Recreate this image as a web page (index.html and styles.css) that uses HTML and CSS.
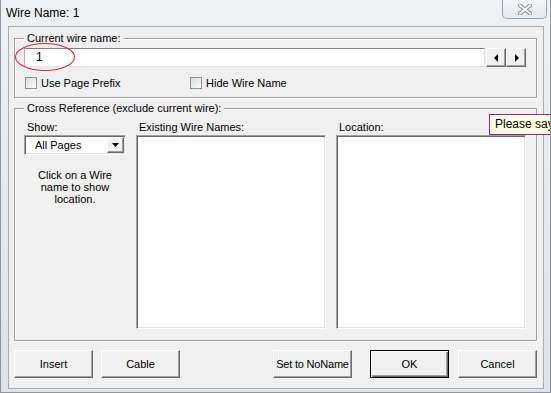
FILE: index.html
```html
<!DOCTYPE html>
<html lang="en">
<head>
  <meta charset="UTF-8" />
  <title>Wire Name: 1</title>
  <link rel="stylesheet" href="styles.css">
</head>
<body>
  <div class="window">
    <div class="titlebar">
      <span class="title">Wire Name: 1</span>
      <div class="close">
        <svg width="14" height="11" viewBox="0 0 14 11">
          <path d="M2 1.5 L12 9.5 M12 1.5 L2 9.5" stroke="#8a9099" stroke-width="4" stroke-linecap="square"/>
          <path d="M2 1.5 L12 9.5 M12 1.5 L2 9.5" stroke="#f4f6f8" stroke-width="2" stroke-linecap="square"/>
        </svg>
      </div>
    </div>

    <div class="client">
      <fieldset class="group group-name">
        <legend>Current wire name:</legend>
        <div class="name-row">
          <div class="textbox">1</div>
          <div class="spin">
            <div class="spin-btn">
              <svg width="5" height="8" viewBox="0 0 5 8"><path d="M4 0 L0 4 L4 8 Z" fill="#000"/></svg>
            </div>
            <div class="spin-btn">
              <svg width="5" height="8" viewBox="0 0 5 8"><path d="M1 0 L5 4 L1 8 Z" fill="#000"/></svg>
            </div>
          </div>
        </div>
        <div class="check-row">
          <label class="check check-prefix"><span class="box"></span>Use Page Prefix</label>
          <label class="check"><span class="box"></span>Hide Wire Name</label>
        </div>
      </fieldset>

      <fieldset class="group group-xref">
        <legend>Cross Reference (exclude current wire):</legend>
        <div class="xref">
          <div class="col-label">Show:</div>
          <div class="col-label">Existing Wire Names:</div>
          <div class="col-label">Location:</div>
          <div class="show-col">
            <div class="combo">
              <span class="combo-text">All Pages</span>
              <span class="combo-btn">
                <svg width="7" height="4" viewBox="0 0 7 4"><path d="M0 0 L7 0 L3.5 4 Z" fill="#000"/></svg>
              </span>
            </div>
            <p class="note">Click on a Wire<br>name to show<br>location.</p>
          </div>
          <div class="listbox"></div>
          <div class="listbox"></div>
        </div>
      </fieldset>

      <div class="buttons">
        <div class="btn">Insert</div>
        <div class="btn">Cable</div>
        <div class="btn btn-noname">Set to NoName</div>
        <div class="btn btn-default">OK</div>
        <div class="btn">Cancel</div>
      </div>
    </div>

    <svg class="mark" width="62" height="30" viewBox="0 0 62 30">
      <ellipse cx="31" cy="15" rx="29.5" ry="13.5" fill="none" stroke="#e0282a" stroke-width="1.1"/>
    </svg>
    <div class="tooltip">Please say the wire name</div>
  </div>
</body>
</html>
```

FILE: styles.css
```css
body {
  margin: 0;
  font-family: "Liberation Sans", Arial, sans-serif;
  font-size: 11px;
  color: #000;
  overflow: hidden;
}
.window {
  position: relative;
  width: 551px;
  height: 393px;
  box-sizing: border-box;
  display: flex;
  flex-direction: column;
  overflow: hidden;
  background: linear-gradient(180deg, #eef2f5 0%, #e3e9ee 60%, #dde4ea 100%);
  border-left: 1px solid #8d969f;
  border-right: 1px solid #8d969f;
  border-bottom: 1px solid #8d969f;
}
.titlebar {
  height: 26px;
  flex: none;
  display: flex;
  align-items: flex-start;
  justify-content: space-between;
}
.title {
  font-size: 12px;
  line-height: 14px;
  margin: 6px 0 0 5px;
}
.close {
  width: 45px;
  height: 19px;
  margin-right: 3px;
  box-sizing: border-box;
  border: 1px solid #98a2ad;
  border-top: none;
  border-radius: 0 0 5px 5px;
  background: linear-gradient(180deg, #f3f5f7, #e4e9ee);
  display: flex;
  align-items: center;
  justify-content: center;
}
.client {
  flex: none;
  height: 363px;
  margin: 0 6px 0 7px;
  box-sizing: border-box;
  border: 1px solid #a3acb5;
  background: #f0f0f0;
  padding: 0 6px 0 5px;
}

/* group boxes */
.group {
  margin: 0;
  border: 1px solid #a0a0a0;
  box-shadow: 1px 1px 0 #fff, inset 1px 1px 0 #fff;
  min-width: 0;
}
.group legend {
  padding: 0 3px;
  font-size: 11px;
  line-height: 14px;
  background: #f0f0f0;
}
.group-name {
  margin-top: 4px;
  padding: 3px 10px 7px 9px;
}
.group-xref {
  margin-top: 3px;
  padding: 5px 10px 11px 9px;
}

/* current wire name */
.name-row {
  display: flex;
  height: 19px;
}
.textbox {
  width: 461px;
  box-sizing: border-box;
  background: #fff;
  border: 1px solid;
  border-color: #7f8388 #e3e6ea #e3e6ea #aeb2b6;
  font-size: 12px;
  line-height: 17px;
  padding-left: 11px;
}
.spin {
  display: flex;
  margin-left: 1px;
}
.spin-btn {
  width: 20px;
  height: 19px;
  box-sizing: border-box;
  border: 1px solid;
  border-color: #fff #696969 #696969 #fff;
  box-shadow: inset -1px -1px 0 #a0a0a0;
  background: #f0f0f0;
  display: flex;
  align-items: center;
  justify-content: center;
}
.check-row {
  display: flex;
  margin-top: 9px;
  line-height: 14px;
}
.check {
  display: flex;
  align-items: center;
  padding-left: 1px;
}
.check-prefix {
  width: 164px;
}
.box {
  width: 12px;
  height: 12px;
  box-sizing: border-box;
  border: 1px solid #8e8f8f;
  background: linear-gradient(135deg, #dcdcdc, #fbfbfb);
  margin-right: 4px;
}

/* cross reference */
.xref {
  display: grid;
  grid-template-columns: 102px 190px 190px;
  grid-template-rows: 15px 194px;
  column-gap: 10px;
}
.col-label {
  padding-left: 3px;
  line-height: 14px;
}
.combo {
  height: 20px;
  box-sizing: border-box;
  border: 1px solid;
  border-color: #a0a0a0 #fff #fff #a0a0a0;
  box-shadow: inset 1px 1px 0 #696969, inset -1px -1px 0 #e3e3e3;
  background: #fff;
  display: flex;
  align-items: center;
  justify-content: space-between;
  padding: 0 1px 0 10px;
}
.combo-btn {
  width: 17px;
  height: 16px;
  box-sizing: border-box;
  border: 1px solid;
  border-color: #fff #696969 #696969 #fff;
  box-shadow: inset -1px -1px 0 #a0a0a0;
  background: #f0f0f0;
  display: flex;
  align-items: center;
  justify-content: center;
}
.note {
  margin: 14px 0 0;
  text-align: center;
  line-height: 12px;
}
.listbox {
  box-sizing: border-box;
  border: 1px solid;
  border-color: #a0a0a0 #fff #fff #a0a0a0;
  box-shadow: inset 1px 1px 0 #696969, inset -1px -1px 0 #e3e3e3;
  background: #fff;
}

/* bottom buttons */
.buttons {
  display: flex;
  margin-top: 9px;
}
.btn {
  width: 79px;
  height: 28px;
  box-sizing: border-box;
  border: 1px solid;
  border-color: #fff #696969 #696969 #fff;
  box-shadow: inset -1px -1px 0 #a0a0a0;
  background: #f0f0f0;
  display: flex;
  align-items: center;
  justify-content: center;
  margin-right: 8px;
  white-space: nowrap;
}
.btn-noname {
  margin-left: auto;
  margin-right: 18px;
  letter-spacing: -0.2px;
}
.btn-default {
  border: 1px solid #000;
  box-shadow: inset 1px 1px 0 #fff, inset -1px -1px 0 #696969, inset -2px -2px 0 #a0a0a0;
  margin-right: 9px;
}
.buttons .btn:last-child {
  margin-right: 0;
}

/* overlays */
.mark {
  position: absolute;
  left: 13px;
  top: 42px;
}
.tooltip {
  position: absolute;
  left: 488px;
  top: 114px;
  height: 21px;
  box-sizing: border-box;
  border: 1px solid #9c1c9e;
  background: #ffffe1;
  font-size: 12px;
  line-height: 19px;
  padding: 0 5px;
  white-space: nowrap;
}
```
